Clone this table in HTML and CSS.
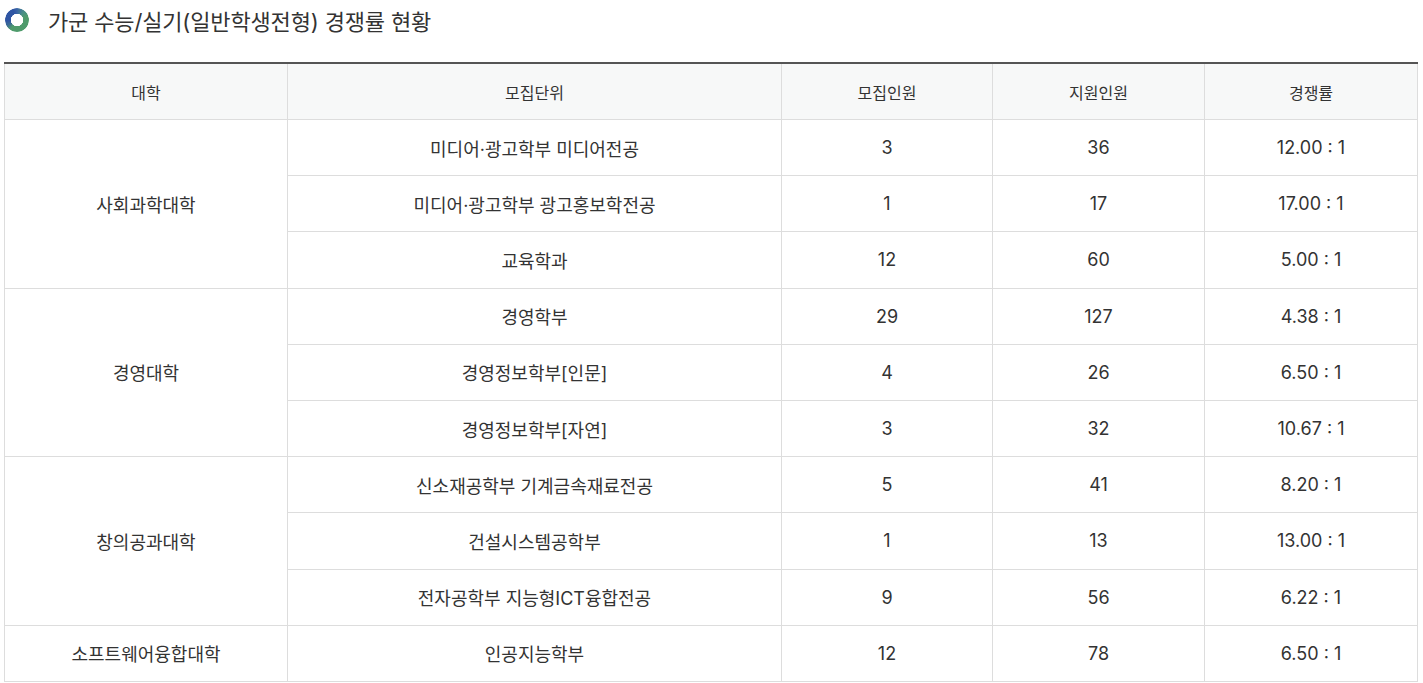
FILE: index.html
```html
<!DOCTYPE html>
<html lang="ko">
<head>
<meta charset="utf-8">
<title>경쟁률 현황</title>
<link rel="stylesheet" href="styles.css">
</head>
<body>
<div class="page">
  <h2 class="title"><span class="ring"></span>가군 수능/실기(일반학생전형) 경쟁률 현황</h2>
  <table class="rate">
    <colgroup>
      <col class="c1"><col class="c2"><col class="c3"><col class="c4"><col class="c5">
    </colgroup>
    <thead>
      <tr><th>대학</th><th>모집단위</th><th>모집인원</th><th>지원인원</th><th>경쟁률</th></tr>
    </thead>
    <tbody>
      <tr><td rowspan="3">사회과학대학</td><td>미디어·광고학부 미디어전공</td><td>3</td><td>36</td><td>12.00 : 1</td></tr>
      <tr><td>미디어·광고학부 광고홍보학전공</td><td>1</td><td>17</td><td>17.00 : 1</td></tr>
      <tr><td>교육학과</td><td>12</td><td>60</td><td>5.00 : 1</td></tr>
      <tr><td rowspan="3">경영대학</td><td>경영학부</td><td>29</td><td>127</td><td>4.38 : 1</td></tr>
      <tr><td>경영정보학부[인문]</td><td>4</td><td>26</td><td>6.50 : 1</td></tr>
      <tr><td>경영정보학부[자연]</td><td>3</td><td>32</td><td>10.67 : 1</td></tr>
      <tr><td rowspan="3">창의공과대학</td><td>신소재공학부 기계금속재료전공</td><td>5</td><td>41</td><td>8.20 : 1</td></tr>
      <tr><td>건설시스템공학부</td><td>1</td><td>13</td><td>13.00 : 1</td></tr>
      <tr><td>전자공학부 지능형ICT융합전공</td><td>9</td><td>56</td><td>6.22 : 1</td></tr>
      <tr><td>소프트웨어융합대학</td><td>인공지능학부</td><td>12</td><td>78</td><td>6.50 : 1</td></tr>
    </tbody>
  </table>
</div>
</body>
</html>
```
FILE: styles.css
```css
html, body {
  margin: 0;
  padding: 0;
  background: #fff;
}
body {
  font-family: Inter, "Noto Sans CJK KR", sans-serif;
  color: #333;
}
.page {
  padding: 0 6px 0 4px;
}
.title {
  display: flex;
  align-items: center;
  gap: 19px;
  margin: 0;
  height: 40px;
  padding-left: 1px;
  font-size: 22px;
  font-weight: 400;
  color: #333;
  letter-spacing: -0.15px;
  margin-bottom: 22px;
}
.ring {
  width: 24px;
  height: 24px;
  border-radius: 50%;
  flex: none;
  background: conic-gradient(#3a64a6 0deg, #4a8f86 40deg, #4f9b6c 70deg, #4f9b6c 215deg, #3d6d94 240deg, #2f55a3 265deg, #2f55a3 340deg, #3a64a6 360deg);
  -webkit-mask: radial-gradient(circle, transparent 6px, #000 6.5px);
  mask: radial-gradient(circle, transparent 6px, #000 6.5px);
}
.rate {
  width: 1413px;
  border-collapse: collapse;
  table-layout: fixed;
  border-top: 2px solid #555;
}
.c1 { width: 283px; }
.c2 { width: 494px; }
.c3 { width: 211px; }
.c4 { width: 212px; }
.c5 { width: 213px; }
.rate th, .rate td {
  border: 1px solid #ddd;
  text-align: center;
  vertical-align: middle;
  padding: 0;
}
.rate th {
  background: #f7f8f8;
  font-weight: 400;
  font-size: 16px;
  height: 55px;
  color: #333;
}
.rate tr:first-child th { border-top: none; }
.rate td {
  font-size: 18px;
  height: 55.2px;
  color: #333;
}
```
